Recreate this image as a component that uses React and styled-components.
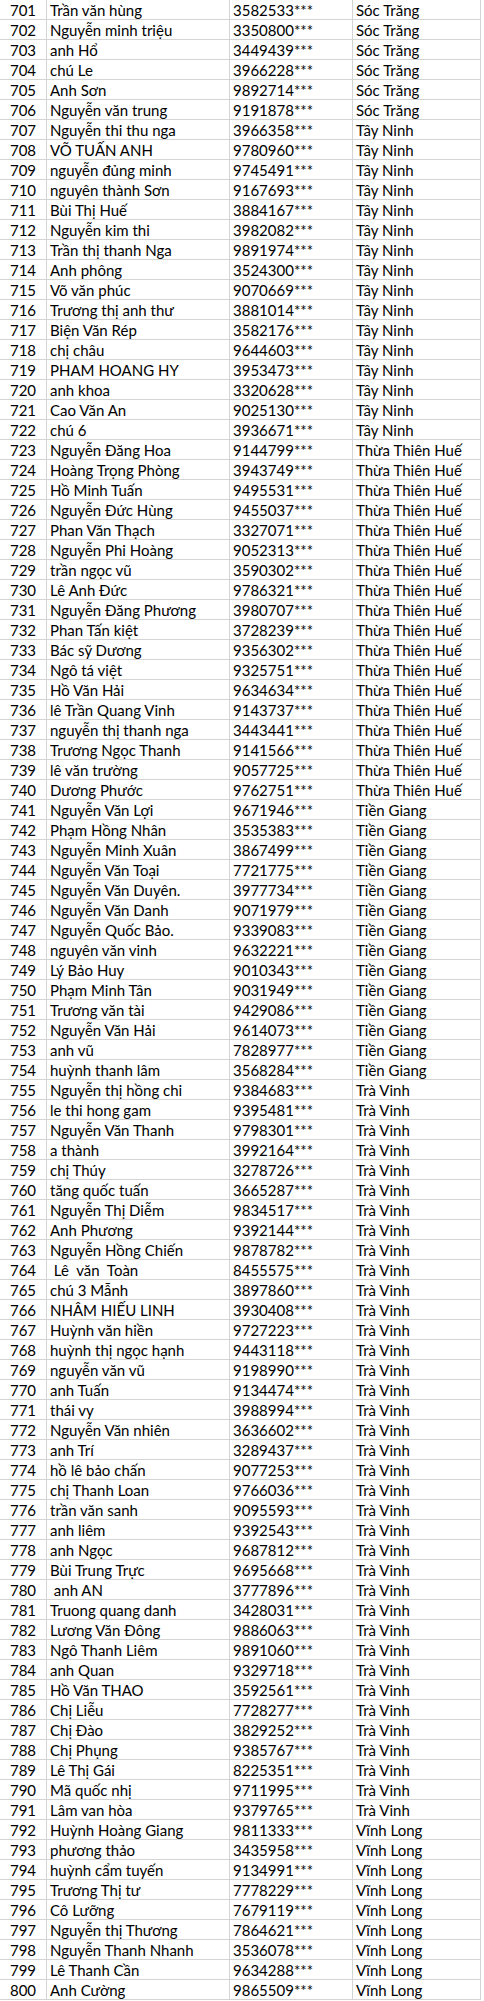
import React from 'react';
import styled, { createGlobalStyle } from 'styled-components';

const GlobalStyle = createGlobalStyle`
  html, body {
    margin: 0;
    padding: 0;
    background: #ffffff;
  }
`;

const RAW = `701|Trần văn hùng|3582533|Sóc Trăng
702|Nguyễn minh triệu|3350800|Sóc Trăng
703|anh Hổ|3449439|Sóc Trăng
704|chú Le|3966228|Sóc Trăng
705|Anh Sơn|9892714|Sóc Trăng
706|Nguyễn văn trung|9191878|Sóc Trăng
707|Nguyễn thi thu nga|3966358|Tây Ninh
708|VÕ TUẤN ANH|9780960|Tây Ninh
709|nguyễn đủng minh|9745491|Tây Ninh
710|nguyên thành Sơn|9167693|Tây Ninh
711|Bùi Thị Huế|3884167|Tây Ninh
712|Nguyễn kim thi|3982082|Tây Ninh
713|Trần thị thanh Nga|9891974|Tây Ninh
714|Anh phông|3524300|Tây Ninh
715|Võ văn phúc|9070669|Tây Ninh
716|Trương thị anh thư|3881014|Tây Ninh
717|Biện Văn Rép|3582176|Tây Ninh
718|chị châu|9644603|Tây Ninh
719|PHAM HOANG HY|3953473|Tây Ninh
720|anh khoa|3320628|Tây Ninh
721|Cao Văn An|9025130|Tây Ninh
722|chú 6|3936671|Tây Ninh
723|Nguyễn Đăng Hoa|9144799|Thừa Thiên Huế
724|Hoàng Trọng Phòng|3943749|Thừa Thiên Huế
725|Hồ Minh Tuấn|9495531|Thừa Thiên Huế
726|Nguyễn Đức Hùng|9455037|Thừa Thiên Huế
727|Phan Văn Thạch|3327071|Thừa Thiên Huế
728|Nguyễn Phi Hoàng|9052313|Thừa Thiên Huế
729|trần ngọc vũ|3590302|Thừa Thiên Huế
730|Lê Anh Đức|9786321|Thừa Thiên Huế
731|Nguyễn Đăng Phương|3980707|Thừa Thiên Huế
732|Phan Tấn kiệt|3728239|Thừa Thiên Huế
733|Bác sỹ Dương|9356302|Thừa Thiên Huế
734|Ngô tá việt|9325751|Thừa Thiên Huế
735|Hồ Văn Hải|9634634|Thừa Thiên Huế
736|lê Trần Quang Vinh|9143737|Thừa Thiên Huế
737|nguyễn thị thanh nga|3443441|Thừa Thiên Huế
738|Trương Ngọc Thanh|9141566|Thừa Thiên Huế
739|lê văn trường|9057725|Thừa Thiên Huế
740|Dương Phước|9762751|Thừa Thiên Huế
741|Nguyễn Văn Lợi|9671946|Tiền Giang
742|Phạm Hồng Nhân|3535383|Tiền Giang
743|Nguyễn Minh Xuân|3867499|Tiền Giang
744|Nguyễn Văn Toại|7721775|Tiền Giang
745|Nguyễn Văn Duyên.|3977734|Tiền Giang
746|Nguyễn Văn Danh|9071979|Tiền Giang
747|Nguyễn Quốc Bảo.|9339083|Tiền Giang
748|nguyên văn vinh|9632221|Tiền Giang
749|Lý Bảo Huy|9010343|Tiền Giang
750|Phạm Minh Tân|9031949|Tiền Giang
751|Trương văn tài|9429086|Tiền Giang
752|Nguyễn Văn Hải|9614073|Tiền Giang
753|anh vũ|7828977|Tiền Giang
754|huỳnh thanh lâm|3568284|Tiền Giang
755|Nguyễn thị hồng chi|9384683|Trà Vinh
756|le thi hong gam|9395481|Trà Vinh
757|Nguyễn Văn Thanh|9798301|Trà Vinh
758|a thành|3992164|Trà Vinh
759|chị Thúy|3278726|Trà Vinh
760|tăng quốc tuấn|3665287|Trà Vinh
761|Nguyễn Thị Diễm|9834517|Trà Vinh
762|Anh Phương|9392144|Trà Vinh
763|Nguyễn Hồng Chiến|9878782|Trà Vinh
764| Lê  văn  Toàn|8455575|Trà Vinh
765|chú 3 Mẫnh|3897860|Trà Vinh
766|NHÂM HIẾU LINH|3930408|Trà Vinh
767|Huỳnh văn hiền|9727223|Trà Vinh
768|huỳnh thị ngọc hạnh|9443118|Trà Vinh
769|nguyễn văn vũ|9198990|Trà Vinh
770|anh Tuấn|9134474|Trà Vinh
771|thái vy|3988994|Trà Vinh
772|Nguyễn Văn nhiên|3636602|Trà Vinh
773|anh Trí|3289437|Trà Vinh
774|hồ lê bảo chấn|9077253|Trà Vinh
775|chị Thanh Loan|9766036|Trà Vinh
776|trần văn sanh|9095593|Trà Vinh
777|anh liêm|9392543|Trà Vinh
778|anh Ngọc|9687812|Trà Vinh
779|Bùi Trung Trực|9695668|Trà Vinh
780| anh AN|3777896|Trà Vinh
781|Truong quang danh|3428031|Trà Vinh
782|Lương Văn Đông|9886063|Trà Vinh
783|Ngô Thanh Liêm|9891060|Trà Vinh
784|anh Quan|9329718|Trà Vinh
785|Hồ Văn THAO|3592561|Trà Vinh
786|Chị Liễu|7728277|Trà Vinh
787|Chị Đào|3829252|Trà Vinh
788|Chị Phụng|9385767|Trà Vinh
789|Lê Thị Gái|8225351|Trà Vinh
790|Mã quốc nhị|9711995|Trà Vinh
791|Lâm van hòa|9379765|Trà Vinh
792|Huỳnh Hoàng Giang|9811333|Vĩnh Long
793|phương thảo|3435958|Vĩnh Long
794|huỳnh cẩm tuyến|9134991|Vĩnh Long
795|Trương Thị tư|7778229|Vĩnh Long
796|Cô Lưỡng|7679119|Vĩnh Long
797|Nguyễn thị Thương|7864621|Vĩnh Long
798|Nguyễn Thanh Nhanh|3536078|Vĩnh Long
799|Lê Thanh Cần|9634288|Vĩnh Long
800|Anh Cường|9865509|Vĩnh Long`;

const rows = RAW.split('\n').map(line => {
  const [no, name, phone, province] = line.split('|');
  return { no, name, phone: phone + '***', province };
});

const Sheet = styled.div`
  width: 481px;
  font-family: 'Lato', 'Open Sans', sans-serif;
  font-size: 15px;
  color: #000;
`;

const Row = styled.div`
  display: grid;
  grid-template-columns: 47px 183px 123px 128px;
  height: 20px;
`;

const Cell = styled.div`
  box-sizing: border-box;
  height: 20px;
  border-right: 1px solid #d4d4d4;
  border-bottom: 1px solid #d4d4d4;
  padding: 2px 0 0 ${p => (p.$center ? 0 : 3)}px;
  text-align: ${p => (p.$center ? 'center' : 'left')};
  line-height: 17px;
  white-space: pre;
  overflow: hidden;
`;

export default function App() {
  return (
    <>
      <GlobalStyle />
      <Sheet>
        {rows.map(r => (
          <Row key={r.no}>
            <Cell $center>{r.no}</Cell>
            <Cell>{r.name}</Cell>
            <Cell>{r.phone}</Cell>
            <Cell>{r.province}</Cell>
          </Row>
        ))}
      </Sheet>
    </>
  );
}
